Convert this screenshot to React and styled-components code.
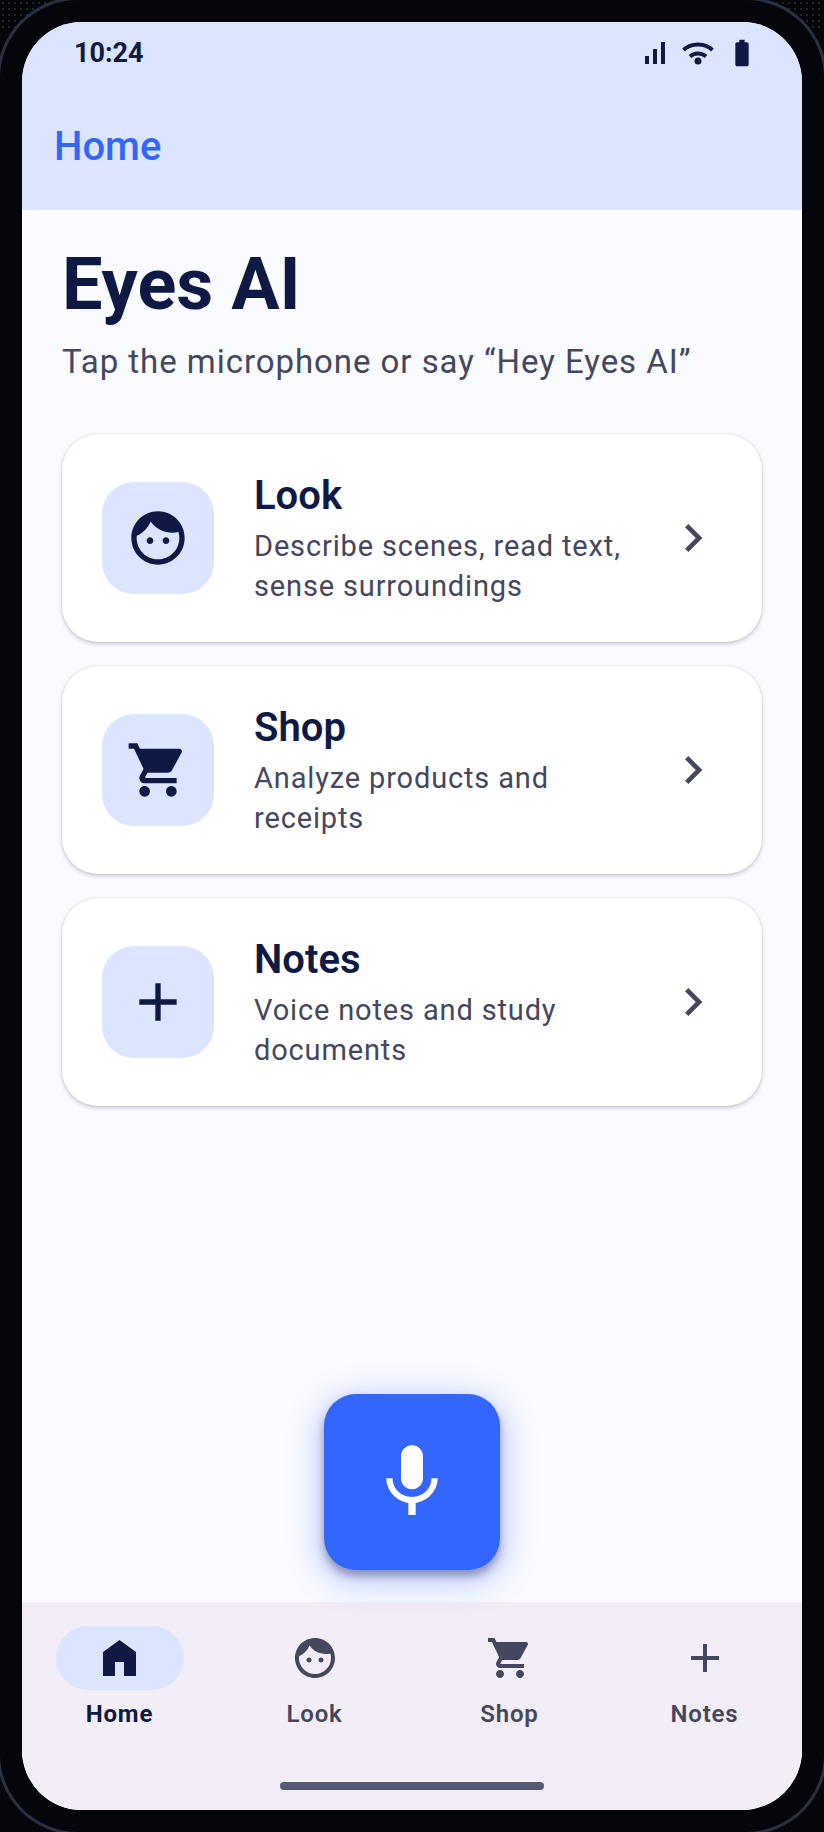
import React from "react";
import styled, { createGlobalStyle } from "styled-components";

const ink = "#0f1a44";
const muted = "#44475e";
const blue = "#3366ff";
const tint = "#dbe5ff";
const frame = "#05060c";

const faceD =
  "M9 11.75c-.69 0-1.25.56-1.25 1.25s.56 1.25 1.25 1.25 1.25-.56 1.25-1.25-.56-1.25-1.25-1.25zm6 0c-.69 0-1.25.56-1.25 1.25s.56 1.25 1.25 1.25 1.25-.56 1.25-1.25-.56-1.25-1.25-1.25zM12 2C6.48 2 2 6.48 2 12s4.48 10 10 10 10-4.48 10-10S17.52 2 12 2zm0 18c-4.41 0-8-3.59-8-8 0-.29.02-.58.05-.86 2.36-1.05 4.23-2.98 5.21-5.37C11.07 8.33 14.05 10 17.42 10c.78 0 1.53-.09 2.25-.26.21.71.33 1.47.33 2.26 0 4.41-3.59 8-8 8z";
const cartD =
  "M7 18c-1.1 0-1.99.9-1.99 2S5.9 22 7 22s2-.9 2-2-.9-2-2-2zM1 2v2h2l3.6 7.59-1.35 2.45c-.16.28-.25.61-.25.96 0 1.1.9 2 2 2h12v-2H7.42c-.14 0-.25-.11-.25-.25l.03-.12.9-1.63h7.45c.75 0 1.41-.41 1.75-1.03l3.58-6.49c.08-.14.12-.31.12-.48 0-.55-.45-1-1-1H5.21l-.94-2H1zm16 16c-1.1 0-1.99.9-1.99 2s.89 2 1.99 2 2-.9 2-2-.9-2-2-2z";
const plusD = "M19 13h-6v6h-2v-6H5v-2h6V5h2v6h6v2z";
const chevronD = "M10 6L8.59 7.41 13.17 12l-4.58 4.59L10 18l6-6z";
const micD =
  "M12 14c1.66 0 2.99-1.34 2.99-3L15 5c0-1.66-1.34-3-3-3S9 3.34 9 5v6c0 1.66 1.34 3 3 3zm5.3-3c0 3-2.54 5.1-5.3 5.1S6.7 14 6.7 11H5c0 3.41 2.72 6.23 6 6.72V21h2v-3.28c3.28-.48 6-3.3 6-6.72h-1.7z";
const batteryD =
  "M15.67 4H14V2h-4v2H8.33C7.6 4 7 4.6 7 5.33v15.33C7 21.4 7.6 22 8.33 22h7.33c.74 0 1.34-.6 1.34-1.33V5.33C17 4.6 16.4 4 15.67 4z";

const Global = createGlobalStyle`
  html, body {
    margin: 0;
    padding: 0;
    overflow: hidden;
    background-color: ${frame};
  }
  /* the faint dots only show in the two top corners, outside the phone */
  body {
    background-image:
      linear-gradient(transparent 28px, ${frame} 28px),
      radial-gradient(circle, #20242f 0.8px, transparent 1px);
    background-size: 100% 100%, 6px 6px;
  }
  * { box-sizing: border-box; }
`;

const Device = styled.div`
  width: 824px;
  height: 1832px;
  padding: 22px;
  background: ${frame};
  border-radius: 78px;
  /* sits just past the window edge, so only the corners of the ring show */
  box-shadow: 0 0 0 3px #2b3040;
  font-family: Roboto, "Liberation Sans", sans-serif;
`;

const Screen = styled.div`
  height: 100%;
  display: flex;
  flex-direction: column;
  overflow: hidden;
  border-radius: 60px;
  background: #fafbff;
`;

const Header = styled.header`
  height: 188px;
  flex: none;
  background: ${tint};
  padding: 0 48px 0 32px;
`;

const StatusBar = styled.div`
  height: 50px;
  margin-left: 20px;
  padding-top: 12px;
  display: flex;
  align-items: center;
  justify-content: space-between;
`;

const Time = styled.span`
  font-size: 27px;
  font-weight: 700;
  color: ${ink};
`;

const StatusIcons = styled.div`
  display: flex;
  align-items: center;
  gap: 16px;
`;

const AppTitle = styled.h2`
  margin: 51px 0 0;
  font-size: 40px;
  line-height: 48px;
  font-weight: 500;
  color: ${blue};
`;

const Main = styled.main`
  flex: 1;
  display: flex;
  flex-direction: column;
  padding: 34px 40px 32px;
`;

const Title = styled.h1`
  margin: 0;
  font-size: 72px;
  line-height: 82px;
  font-weight: 700;
  color: ${ink};
`;

const Subtitle = styled.p`
  margin: 14px 0 0;
  font-size: 33px;
  line-height: 44px;
  letter-spacing: 0.95px;
  color: ${muted};
`;

const Cards = styled.div`
  margin-top: 50px;
  display: flex;
  flex-direction: column;
  gap: 24px;
`;

const Card = styled.div`
  height: 208px;
  display: flex;
  align-items: center;
  gap: 40px;
  padding: 0 41px 0 40px;
  background: #fff;
  border-radius: 36px;
  box-shadow: 0 2px 4px rgba(40, 40, 80, 0.24), 0 0 2px rgba(40, 40, 80, 0.14);
`;

const IconTile = styled.div`
  width: 112px;
  height: 112px;
  flex: none;
  display: flex;
  align-items: center;
  justify-content: center;
  border-radius: 32px;
  background: ${tint};
`;

const CardText = styled.div`
  flex: 1;
  min-width: 0;
  padding-top: 2px;
`;

const CardTitle = styled.h3`
  margin: 0;
  font-size: 40px;
  line-height: 46px;
  font-weight: 600;
  color: ${ink};
`;

const CardDesc = styled.p`
  margin: 7px 0 0;
  font-size: 29px;
  line-height: 40px;
  letter-spacing: 0.85px;
  color: ${muted};
`;

const MicButton = styled.button`
  position: relative;
  z-index: 1;
  margin: auto auto 0;
  width: 176px;
  height: 176px;
  flex: none;
  display: flex;
  align-items: center;
  justify-content: center;
  padding: 0;
  border: 0;
  border-radius: 32px;
  background: ${blue};
  box-shadow: 0 6px 8px rgba(30, 30, 60, 0.38), 0 8px 32px 6px rgba(51, 102, 255, 0.3);
`;

const Nav = styled.nav`
  height: 208px;
  flex: none;
  display: flex;
  flex-direction: column;
  padding-top: 24px;
  background: #f3edf7;
`;

const Tabs = styled.div`
  display: grid;
  grid-template-columns: repeat(4, 1fr);
`;

const Tab = styled.div`
  display: flex;
  flex-direction: column;
  align-items: center;
  gap: 8px;
  color: ${(p) => (p.$active ? ink : muted)};
`;

const Pill = styled.div`
  width: 128px;
  height: 64px;
  display: flex;
  align-items: center;
  justify-content: center;
  border-radius: 32px;
  background: ${(p) => (p.$active ? tint : "transparent")};
`;

const TabLabel = styled.span`
  font-size: 24px;
  line-height: 32px;
  font-weight: ${(p) => (p.$active ? 700 : 600)};
  letter-spacing: 0.8px;
`;

const HomeBar = styled.div`
  margin: auto auto 20px;
  width: 264px;
  height: 8px;
  border-radius: 4px;
  background: #565a75;
`;

function Icon({ d, size = 48, color = "currentColor" }) {
  return (
    <svg width={size} height={size} viewBox="0 0 24 24" fill={color}>
      <path d={d} />
    </svg>
  );
}

function HomeIcon() {
  return (
    <svg width="33" height="36" viewBox="0 0 33 36" fill="currentColor">
      <path d="M16.5 0 33 12v24H21V22h-9v14H0V12z" />
    </svg>
  );
}

function SignalIcon() {
  return (
    <svg width="21" height="22" viewBox="0 0 21 22" fill={ink}>
      <rect x="0" y="14" width="4" height="8" />
      <rect x="8" y="7" width="4" height="15" />
      <rect x="16" y="0" width="4" height="22" />
    </svg>
  );
}

function WifiIcon() {
  return (
    <svg width="32" height="24" viewBox="0 0 32 24" fill="none" stroke={ink} strokeWidth="4">
      <path d="M1.500 9C9 1.500 23 1.500 30.500 9" />
      <path d="M8 15.500c4.500-4 11.500-4 16 0" />
      <circle cx="16" cy="20" r="3.500" fill={ink} stroke="none" />
    </svg>
  );
}

function BatteryIcon() {
  return (
    <svg width="24" height="32" viewBox="3 0 18 24" fill={ink}>
      <path d={batteryD} />
    </svg>
  );
}

const features = [
  { title: "Look", icon: faceD, lines: "Describe scenes, read text, sense surroundings" },
  { title: "Shop", icon: cartD, lines: "Analyze products and receipts" },
  { title: "Notes", icon: plusD, lines: "Voice notes and study documents" },
];

const tabs = [
  { label: "Home", active: true },
  { label: "Look", icon: faceD },
  { label: "Shop", icon: cartD },
  { label: "Notes", icon: plusD },
];

export default function App() {
  return (
    <>
      <Global />
      <Device>
        <Screen>
          <Header>
            <StatusBar>
              <Time>10:24</Time>
              <StatusIcons>
                <SignalIcon />
                <WifiIcon />
                <BatteryIcon />
              </StatusIcons>
            </StatusBar>
            <AppTitle>Home</AppTitle>
          </Header>
          <Main>
            <Title>Eyes AI</Title>
            <Subtitle>Tap the microphone or say “Hey Eyes AI”</Subtitle>
            <Cards>
              {features.map((f) => (
                <Card key={f.title}>
                  <IconTile>
                    <Icon d={f.icon} size={64} color={ink} />
                  </IconTile>
                  <CardText>
                    <CardTitle>{f.title}</CardTitle>
                    <CardDesc>{f.lines}</CardDesc>
                  </CardText>
                  <Icon d={chevronD} size={56} color={muted} />
                </Card>
              ))}
            </Cards>
            <MicButton aria-label="Microphone">
              <Icon d={micD} size={88} color="#fff" />
            </MicButton>
          </Main>
          <Nav>
            <Tabs>
              {tabs.map((t) => (
                <Tab key={t.label} $active={t.active}>
                  <Pill $active={t.active}>
                    {t.active ? <HomeIcon /> : <Icon d={t.icon} size={48} />}
                  </Pill>
                  <TabLabel $active={t.active}>{t.label}</TabLabel>
                </Tab>
              ))}
            </Tabs>
            <HomeBar />
          </Nav>
        </Screen>
      </Device>
    </>
  );
}
